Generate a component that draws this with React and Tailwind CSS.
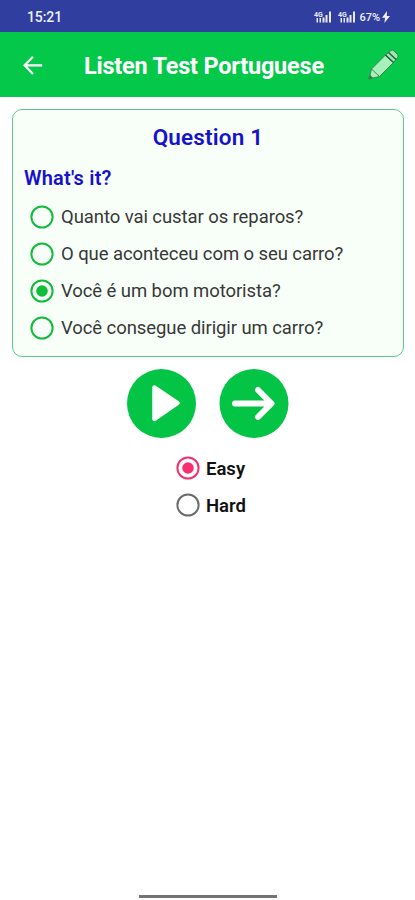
import React, { useState } from "react";

const answers = [
  "Quanto vai custar os reparos?",
  "O que aconteceu com o seu carro?",
  "Você é um bom motorista?",
  "Você consegue dirigir um carro?",
];

const levels = ["Easy", "Hard"];

const Radio = ({ checked, className }) => (
  <svg viewBox="0 0 24 24" className={`w-6 h-6 shrink-0 ${className}`}>
    <circle cx="12" cy="12" r="10.6" fill="none" stroke="currentColor" strokeWidth="2" />
    {checked && <circle cx="12" cy="12" r="5.8" fill="currentColor" />}
  </svg>
);

const Signal = () => (
  <svg viewBox="0 0 18 14" className="w-[18px] h-[14px]" fill="#e8eaff">
    <text x="0" y="6.5" fontSize="7" fontWeight="700" fontFamily="Roboto, sans-serif">
      4G
    </text>
    <path d="M2.5 8h1.5v4.5H2.5zM5.5 8h1.5v4.5H5.5zM8.5 7.5h2v5h-2zM11.5 5h2v7.5h-2zM15 1.5h2v11h-2z" />
  </svg>
);

const StatusBar = () => (
  <div className="h-8 bg-[#303f9f] flex items-center justify-between pl-[27px] pr-[25px] text-[#eef0ff]">
    <span className="text-[14px] leading-none font-medium tracking-[-0.1px] pt-[2px]">15:21</span>
    <div className="flex items-center pt-[2px]">
      <Signal />
      <span className="w-[6px]" />
      <Signal />
      <span className="ml-[3px] text-[11px] leading-none font-medium">67%</span>
      <svg viewBox="0 0 8 12" className="ml-[2px] w-2 h-3" fill="currentColor">
        <path d="M5 0 0 6.8H3L2.4 12 8 5H4.8z" />
      </svg>
    </div>
  </div>
);

const Pencil = () => (
  <svg viewBox="0 0 32 32" className="w-8 h-8" stroke="#35804c" strokeWidth="0.9" strokeLinejoin="round">
    <path d="M2 30 4.5 20 18.5 6 26.5 13.5 12.5 27.5z" fill="#a8f0bb" />
    <path d="M18.5 6 24 1.5Q25.5 0.5 27 2L30.5 5.5Q31.8 7 30.5 8.5L26.5 13.5z" fill="#9ce8b0" />
    <path d="M4.5 20 12.5 27.5" fill="none" />
    <path d="M18.5 6l8 7.5M21.5 3.5l7.5 7" fill="none" stroke="#2c5f3b" strokeWidth="1.5" />
    <path d="M2 30l1-3.8L5.5 29z" fill="#3f7350" />
  </svg>
);

const Header = () => (
  <header className="h-[65px] bg-[#04c84a] flex items-center">
    <button className="ml-[23px] w-5 h-5" aria-label="Back">
      <svg viewBox="0 0 20 20" className="w-5 h-5" fill="none" stroke="#fff" strokeWidth="2.2">
        <path d="M19.2 10.3H2M10 1.7 1.6 10.3 10 18.9" />
      </svg>
    </button>
    <h1 className="ml-[41px] text-[23.5px] tracking-[-0.22px] leading-none font-bold text-white whitespace-nowrap pt-[4px]">
      Listen Test Portuguese
    </h1>
    <button className="ml-auto mr-[16px] w-8 h-8" aria-label="Edit">
      <Pencil />
    </button>
  </header>
);

const App = () => {
  const [answer, setAnswer] = useState(2);
  const [level, setLevel] = useState("Easy");

  return (
    <div className="h-[900px] flex flex-col bg-white font-[Roboto,sans-serif] overflow-hidden">
      <StatusBar />
      <Header />

      {/* Question */}
      <section className="mt-3 mx-[12px] mr-[11px] h-[248px] rounded-[10px] border border-[#5fc98a] bg-[#f7fff8]">
        <h2 className="mt-[14px] text-center text-[22.5px] leading-[26px] tracking-[0.18px] font-semibold text-[#1712cc]">
          Question 1
        </h2>
        <p className="mt-[16px] ml-[11px] text-[20px] leading-6 tracking-[0.2px] font-semibold text-[#1712cc]">
          What&apos;s it?
        </p>
        <ul className="mt-[8px] ml-[17px]">
          {answers.map((text, idx) => (
            <li
              key={text}
              onClick={() => setAnswer(idx)}
              className="h-[37px] flex items-center gap-[7px] cursor-pointer"
            >
              <Radio checked={idx === answer} className="text-[#12bb3c]" />
              <span className="pt-px text-[18.5px] leading-6 tracking-[-0.08px] text-[#383838] whitespace-nowrap">
                {text}
              </span>
            </li>
          ))}
        </ul>
      </section>

      {/* Controls */}
      <div className="mt-3 flex justify-center gap-[23px]">
        <button className="w-[70px] h-[70px]" aria-label="Play">
          <svg viewBox="0 0 70 70" className="w-[70px] h-[70px]">
            <circle cx="35.5" cy="34.5" r="34.5" fill="#04c446" />
            <path
              d="M28.5 18.5 51.5 34 28.5 50z"
              fill="#fff"
              stroke="#fff"
              strokeWidth="4.5"
              strokeLinejoin="round"
            />
          </svg>
        </button>
        <button className="w-[70px] h-[70px]" aria-label="Next">
          <svg viewBox="0 0 70 70" className="w-[70px] h-[70px]">
            <circle cx="35" cy="34.5" r="34.5" fill="#04c446" />
            <path
              d="M16 34.5H52M39 21 52.5 34.5 39 48"
              fill="none"
              stroke="#fff"
              strokeWidth="6"
              strokeLinecap="round"
              strokeLinejoin="round"
            />
          </svg>
        </button>
      </div>

      {/* Difficulty */}
      <div className="mt-[10.5px] ml-[175.5px]">
        {levels.map((name) => (
          <div
            key={name}
            onClick={() => setLevel(name)}
            className="h-[37px] flex items-center gap-[6.5px] cursor-pointer"
          >
            <Radio
              checked={name === level}
              className={name === level ? "text-[#f52f70]" : "text-[#6b6b6b]"}
            />
            <span className="pt-px text-[18.5px] leading-6 font-semibold text-[#111]">{name}</span>
          </div>
        ))}
      </div>

      <div className="mt-auto mb-[2px] ml-[139px] w-[138px] h-[3px] bg-[#737373]" />
    </div>
  );
};

export default App;
